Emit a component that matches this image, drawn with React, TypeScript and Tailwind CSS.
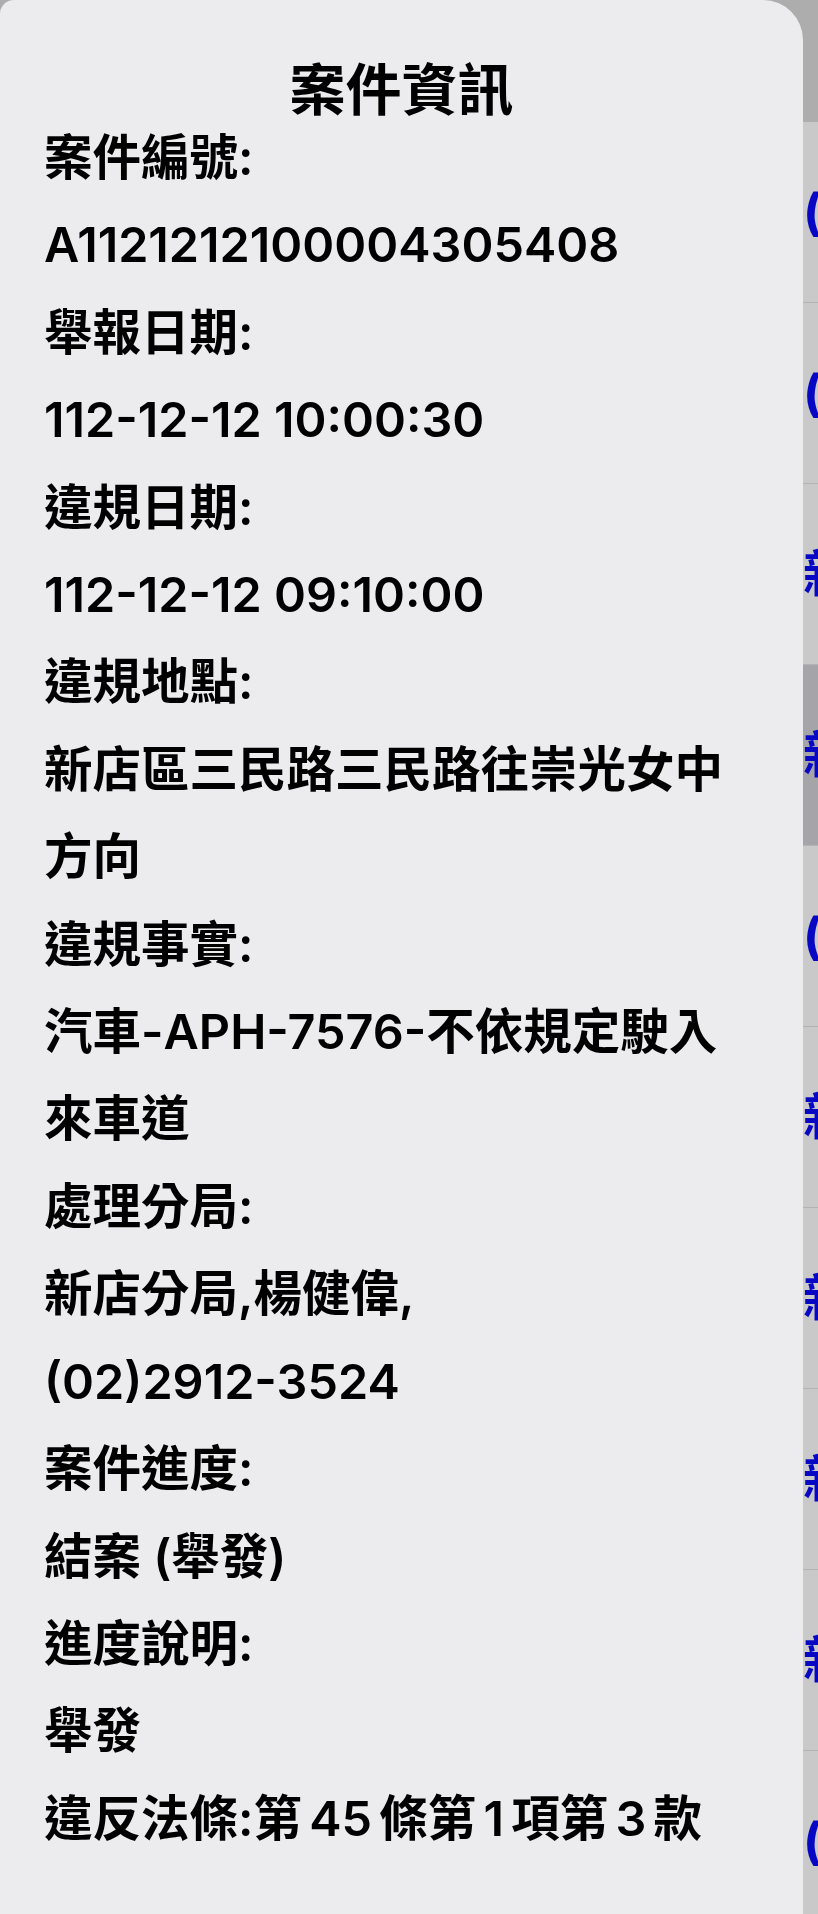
import React from "react";

type Field = {
  label: string;
  lines: string[];
};

const fields: Field[] = [
  { label: "案件編號:", lines: ["A1121212100004305408"] },
  { label: "舉報日期:", lines: ["112-12-12 10:00:30"] },
  { label: "違規日期:", lines: ["112-12-12 09:10:00"] },
  { label: "違規地點:", lines: ["新店區三民路三民路往崇光女中", "方向"] },
  { label: "違規事實:", lines: ["汽車-APH-7576-不依規定駛入", "來車道"] },
  { label: "處理分局:", lines: ["新店分局,楊健偉,", "(02)2912-3524"] },
  { label: "案件進度:", lines: ["結案 (舉發)"] },
  { label: "進度說明:", lines: ["舉發"] },
];

// rows of the case list that sits behind the sheet
const listRows = [
  { text: "(未處理)", selected: false },
  { text: "(未處理)", selected: false },
  { text: "新店區三民路", selected: false },
  { text: "新店區三民路", selected: true },
  { text: "(未處理)", selected: false },
  { text: "新店區中正路", selected: false },
  { text: "新店區北新路", selected: false },
  { text: "新店區民權路", selected: false },
  { text: "新店區中興路", selected: false },
  { text: "(未處理)", selected: false },
];

const FONT = '"Inter", "Noto Sans CJK TC", sans-serif';

function CaseList() {
  return (
    <div className="flex flex-col">
      <div className="h-[122px] bg-[#adadad]" />
      {listRows.map((row, i) => (
        <div
          key={i}
          className={`flex h-[181px] items-center overflow-hidden whitespace-nowrap border-b border-[#b3b3b3] pl-[803px] ${
            row.selected ? "bg-[#a5a5a9]" : "bg-[#c9c9c9]"
          }`}
        >
          <span className="text-[50px] font-bold text-[#0808c4]">{row.text}</span>
        </div>
      ))}
    </div>
  );
}

function CaseInfoSheet() {
  return (
    <div className="absolute left-0 top-0 h-[1914px] w-[803px] rounded-tl-[14px] rounded-tr-[40px] bg-[#ececef] pt-[66px] text-black">
      <h2 className="text-center text-[56px] font-bold leading-[48px]">案件資訊</h2>
      <div className="flex flex-col px-[44px] text-[48.5px] font-semibold leading-[87.4px]">
        {fields.map((f) => (
          <div key={f.label} className="flex flex-col">
            <div>{f.label}</div>
            {f.lines.map((line) => (
              <div key={line} className="whitespace-nowrap">
                {line}
              </div>
            ))}
          </div>
        ))}
        <div className="whitespace-nowrap [word-spacing:-5px]">違反法條:第 45 條第 1 項第 3 款</div>
      </div>
    </div>
  );
}

export default function App() {
  return (
    <div className="relative h-[1914px] w-[818px] overflow-hidden bg-[#9c9c9c]" style={{ fontFamily: FONT }}>
      <CaseList />
      <CaseInfoSheet />
    </div>
  );
}
